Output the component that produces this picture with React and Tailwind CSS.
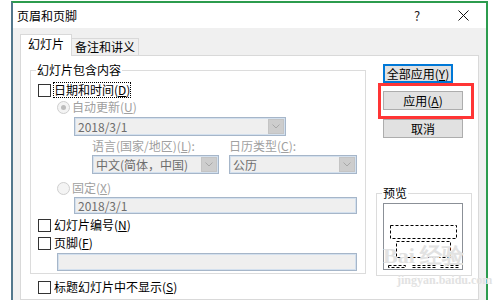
import React from "react";
import clsx from "clsx";

const Key = ({ k }) => (
  <>
    (<span className="underline underline-offset-1">{k}</span>)
  </>
);

const Check = ({ label, k, focus, className }) => (
  <div className={clsx("flex h-4 items-center", className)}>
    <span className="h-[13px] w-[13px] border border-[#333] bg-white" />
    <span
      className={clsx(
        "ml-[3px] leading-[14px]",
        focus && "outline outline-1 outline-dotted outline-black"
      )}
    >
      {label}
      <Key k={k} />
    </span>
  </div>
);

const Radio = ({ label, k, checked, className }) => (
  <div className={clsx("flex h-4 items-center text-[#a0a0a0]", className)}>
    <span className="flex h-[13px] w-[13px] items-center justify-center rounded-full border border-[#cfcfcf] bg-[#f4f4f4]">
      {checked && <span className="h-[5px] w-[5px] rounded-full bg-[#bdbdbd]" />}
    </span>
    <span className="ml-[2px] leading-4">
      {label}
      <Key k={k} />
    </span>
  </div>
);

const Chevron = () => (
  <svg width="8" height="5" viewBox="0 0 8 5">
    <path d="M0.5 0.5 L4 4 L7.5 0.5" fill="none" stroke="#a8a8a8" strokeWidth="1" />
  </svg>
);

const Combo = ({ value, className }) => (
  <div
    className={clsx(
      "flex h-[19px] items-center border border-[#a6b6c9] bg-[#efefef] shadow-[inset_0_0_0_1px_#d3e0ee]",
      className
    )}
  >
    <span className="ml-[3px] flex-1 leading-4 text-[#6d6d6d]">{value}</span>
    <span className="mr-[1px] flex h-[15px] w-[16px] items-center justify-center border border-[#c4c4c4] bg-[#cdcdcd]">
      <Chevron />
    </span>
  </div>
);

const TextBox = ({ value, className }) => (
  <div
    className={clsx(
      "flex items-center border border-[#a6b6c9] bg-[#efefef] shadow-[inset_0_0_0_1px_#d3e0ee]",
      className
    )}
  >
    <span className="ml-[3px] leading-4 text-[#6d6d6d]">{value}</span>
  </div>
);

const Button = ({ children, className }) => (
  <div
    className={clsx(
      "flex h-[19px] items-center justify-center border border-[#adadad] bg-[#e1e1e1] leading-4",
      className
    )}
  >
    {children}
  </div>
);

export default function App() {
  return (
    <div className="h-[300px] w-[500px] overflow-hidden bg-white pl-[11px] pt-[1px] font-['Noto_Sans_CJK_SC',sans-serif] text-[12px] text-black">
      <div className="flex h-[299px] w-[477px] flex-col border-l-2 border-r-2 border-t-2 border-l-[#52778c] border-r-[#2c9c4e] border-t-[#2c9c4e]">
        {/* Title bar */}
        <div className="flex h-[25px] items-center bg-white pl-[4px]">
          <span className="text-[12px] leading-4">页眉和页脚</span>
          <div className="ml-auto flex items-center">
            <span className="w-[46px] text-center text-[13px] leading-4 text-[#222]">?</span>
            <span className="flex w-[46px] items-center justify-center">
              <svg width="11" height="11" viewBox="0 0 11 11">
                <path d="M0.5 0.5 L10.5 10.5 M10.5 0.5 L0.5 10.5" stroke="#111" strokeWidth="1" />
              </svg>
            </span>
          </div>
        </div>

        {/* Body */}
        <div className="flex flex-1 flex-col bg-[#f0f0f0] pl-[7px] pt-[6px]">
          {/* Tabs */}
          <div className="flex items-end">
            <div className="relative z-10 -mb-px h-[22px] w-[52px] border border-b-0 border-[#d9d9d9] bg-white pt-[1px] text-center leading-4">
              幻灯片
            </div>
            <div className="h-[17px] w-[67px] border border-b-0 border-l-0 border-[#d9d9d9] bg-[#f0f0f0] text-center leading-[15px]">
              备注和讲义
            </div>
          </div>

          {/* Tab panel */}
          <div className="flex w-[459px] flex-1 border border-[#d9d9d9] bg-white">
            {/* Left column */}
            <div className="flex flex-col pl-[9px]">
              <fieldset className="mt-[6px] w-[336px] border border-[#dcdcdc] pb-[2px]">
                <legend className="ml-[5px] px-[1px] leading-4">幻灯片包含内容</legend>
                <div className="flex flex-col pl-[7px]">
                  <Check label="日期和时间" k="D" focus className="mt-[4px]" />
                  <Radio label="自动更新" k="U" checked className="ml-[19px] mt-[1px]" />
                  <Combo value="2018/3/1" className="ml-[36px] mt-[2px] w-[212px]" />
                  <div className="ml-[54px] mt-[2px] flex h-4 items-center leading-4 text-[#a0a0a0]">
                    <span className="w-[137px]">
                      语言(国家/地区)
                      <Key k="L" />:
                    </span>
                    <span>
                      日历类型
                      <Key k="C" />:
                    </span>
                  </div>
                  <div className="ml-[54px] mt-[1px] flex gap-[10px]">
                    <Combo value="中文(简体，中国)" className="w-[127px]" />
                    <Combo value="公历" className="w-[128px]" />
                  </div>
                  <Radio label="固定" k="X" className="ml-[19px] mt-[6px]" />
                  <TextBox value="2018/3/1" className="ml-[36px] mt-[1px] h-[17px] w-[283px]" />
                  <Check label="幻灯片编号" k="N" className="mt-[3px]" />
                  <Check label="页脚" k="F" className="mt-[2px]" />
                  <TextBox value="" className="ml-[19px] mt-[2px] h-[18px] w-[300px]" />
                </div>
              </fieldset>
              <Check label="标题幻灯片中不显示" k="S" className="ml-[8px] mt-[5px]" />
            </div>

            {/* Right column */}
            <div className="relative ml-[10px] flex w-[100px] flex-col">
              <div className="ml-[7px] mt-[8px] flex h-[19px] w-[70px] items-center justify-center border-2 border-[#0078d7] bg-[#e1e1e1] leading-4">
                全部应用
                <Key k="Y" />
              </div>
              <div className="ml-[2px] h-[36px] w-[96px] border-[3px] border-[#ff3535] pl-[2px] pt-[5px]">
                <Button className="w-[80px]">
                  应用
                  <Key k="A" />
                </Button>
              </div>
              <Button className="ml-[7px] w-[80px]">取消</Button>

              <fieldset className="mt-[47px] w-[96px] border border-[#dcdcdc] pb-[5px]">
                <legend className="ml-[5px] px-[1px] leading-4">预览</legend>
                <div className="ml-[6px] mt-[2px] h-[67px] w-[80px] border border-[#8b9097] bg-white">
                  <svg width="78" height="65" viewBox="0 0 78 65">
                    <g fill="none" stroke="#000" strokeWidth="1" strokeDasharray="3 2">
                      <rect x="6.5" y="21.5" width="66" height="13" />
                      <rect x="12.5" y="37.5" width="54" height="16" />
                      <rect x="4.5" y="61.5" width="17" height="2" />
                      <rect x="28.5" y="61.5" width="23" height="2" />
                      <rect x="56.5" y="61.5" width="18" height="2" />
                    </g>
                  </svg>
                </div>
              </fieldset>

              {/* watermark */}
              <div className="pointer-events-none absolute left-[7px] top-[188px] flex flex-col font-['Liberation_Serif',serif] text-[#e2e2e2]">
                <span className="text-[22px] font-bold leading-6">Bai 经验</span>
                <span className="ml-[14px] mt-[6px] text-[12px] font-bold leading-[12px]">jingyan.baidu.com</span>
              </div>
            </div>
          </div>
        </div>
      </div>
    </div>
  );
}
